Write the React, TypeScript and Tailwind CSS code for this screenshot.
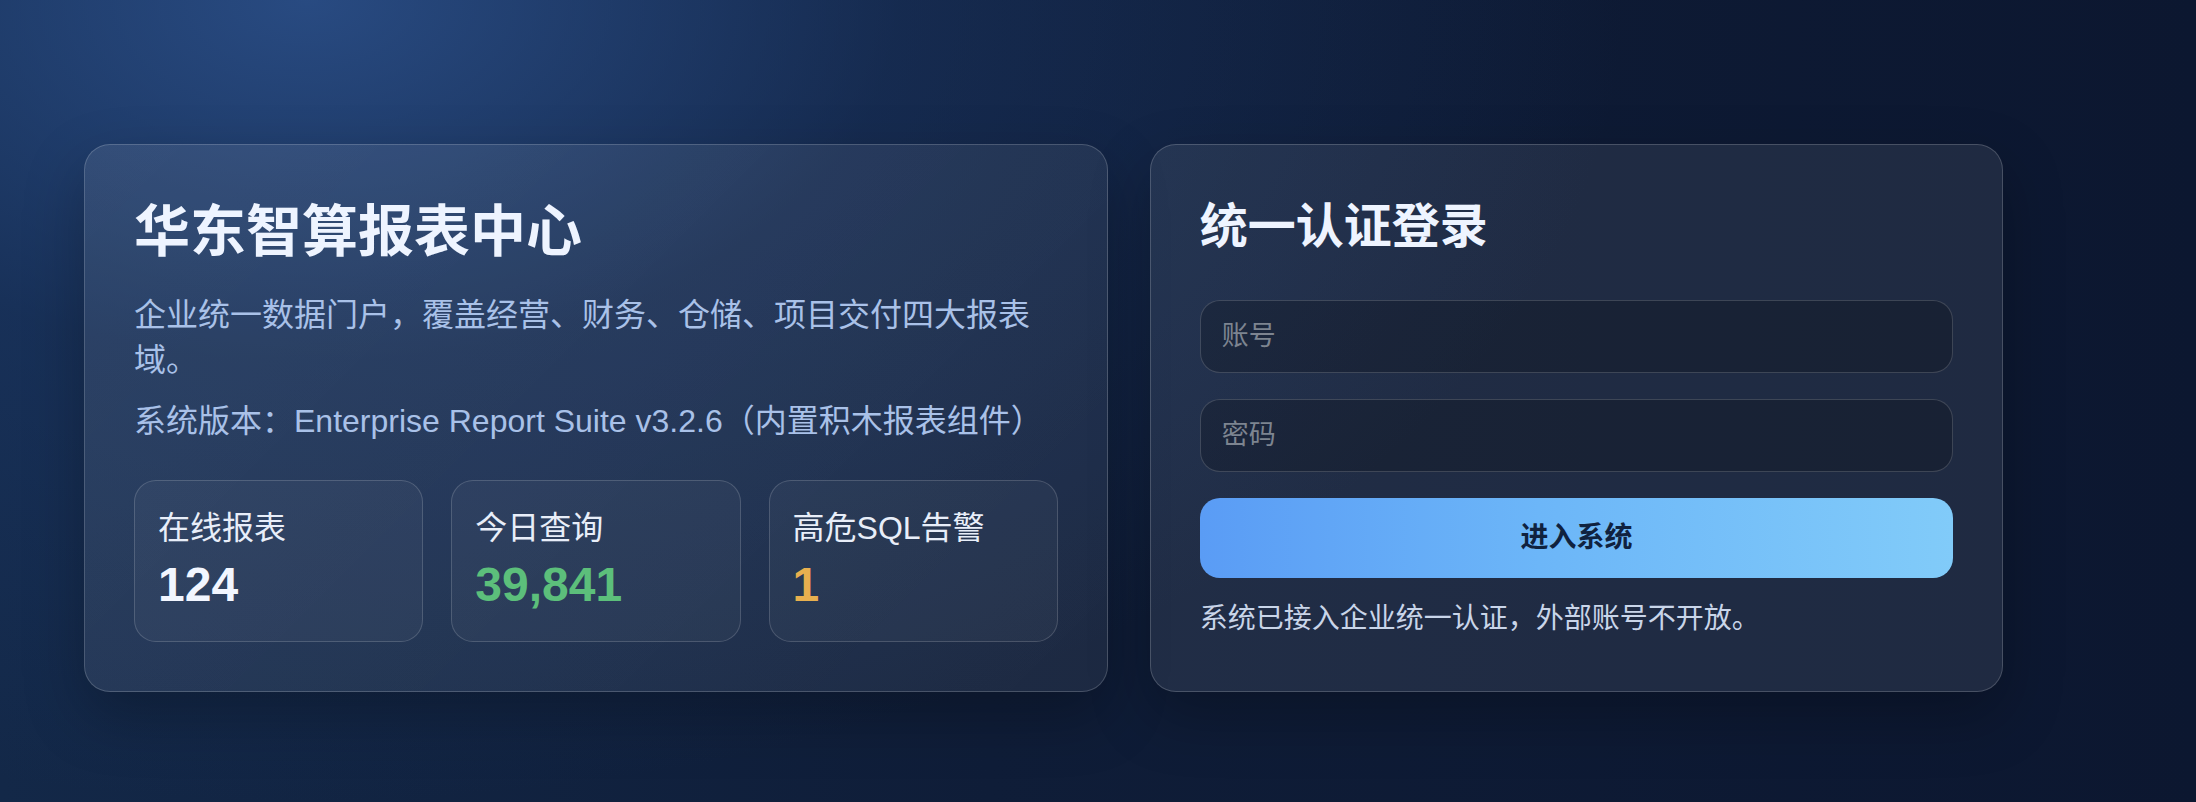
import React from "react";

const FONT = '"Liberation Sans", "Noto Sans CJK SC", sans-serif';

function Stat({ label, value, color }: { label: string; value: string; color: string }) {
  return (
    <div className="h-[162px] rounded-[22px] border border-white/[0.16] bg-white/[0.04] px-[23px] pt-[27px]">
      <div className="text-[32px] leading-[40px] text-[#e8eef9]">{label}</div>
      <div className={`mt-[9px] text-[48px] font-bold leading-[56px] ${color}`}>{value}</div>
    </div>
  );
}

export default function App() {
  return (
    <div
      className="h-[802px] w-full overflow-hidden bg-[radial-gradient(ellipse_60%_100%_at_14%_0%,rgba(46,84,145,0.8)_0%,rgba(30,60,110,0.42)_45%,rgba(14,26,49,0)_100%),linear-gradient(90deg,#132848_0%,#0f1d38_45%,#0c1730_100%)] pl-[84px] pt-[144px]"
      style={{ fontFamily: FONT }}
    >
      <div className="grid w-[1919px] grid-cols-[1.2fr_1fr] gap-[42px]">
        <section className="rounded-[26px] border border-white/[0.18] bg-[linear-gradient(135deg,rgba(255,255,255,0.09),rgba(255,255,255,0.06))] px-[49px] pb-[49px] pt-[53px] shadow-[0_24px_60px_rgba(0,0,0,0.25)]">
          <h1 className="text-[56px] font-bold leading-[67px] text-[#eef4ff]">华东智算报表中心</h1>
          <p className="mt-[28px] text-[32px] leading-[45px] text-[#a9c1e8]">
            企业统一数据门户，覆盖经营、财务、仓储、项目交付四大报表域。
          </p>
          <p className="mt-[16px] text-[32px] leading-[45px] text-[#a9c1e8]">
            系统版本：Enterprise Report Suite v3.2.6（内置积木报表组件）
          </p>
          <div className="mt-[36px] grid grid-cols-3 gap-[28px]">
            <Stat label="在线报表" value="124" color="text-[#f2f6ff]" />
            <Stat label="今日查询" value="39,841" color="text-[#5cbf7b]" />
            <Stat label="高危SQL告警" value="1" color="text-[#e8b04f]" />
          </div>
        </section>

        <section className="flex flex-col rounded-[26px] border border-white/[0.18] bg-white/[0.08] px-[49px] pb-[49px] pt-[53px] shadow-[0_24px_60px_rgba(0,0,0,0.25)]">
          <h2 className="text-[48px] font-bold leading-[58px] text-[#eef4ff]">统一认证登录</h2>
          <input
            className="mt-[44px] h-[73px] w-full rounded-[20px] border border-white/[0.16] bg-black/[0.2] px-[21px] text-[27px] text-[#e8eef9] outline-none placeholder:text-[#7d8490]"
            placeholder="账号"
            style={{ fontFamily: FONT }}
          />
          <input
            type="password"
            className="mt-[26px] h-[73px] w-full rounded-[20px] border border-white/[0.16] bg-black/[0.2] px-[21px] text-[27px] text-[#e8eef9] outline-none placeholder:text-[#7d8490]"
            placeholder="密码"
            style={{ fontFamily: FONT }}
          />
          <button
            className="mt-[26px] h-[80px] w-full rounded-[20px] bg-[linear-gradient(90deg,#5a9cf5_0%,#6cb6f8_45%,#81cbf9_100%)] text-[28px] font-bold text-[#10223f]"
            style={{ fontFamily: FONT }}
          >
            进入系统
          </button>
          <p className="mt-[20px] text-[28px] leading-[42px] text-[#c9d5e9]">系统已接入企业统一认证，外部账号不开放。</p>
        </section>
      </div>
    </div>
  );
}
